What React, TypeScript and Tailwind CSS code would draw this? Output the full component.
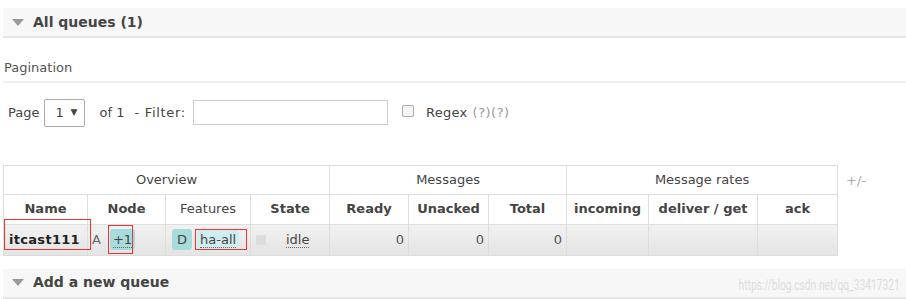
import type { ReactNode } from "react";

const font = { fontFamily: '"DejaVu Sans", Verdana, sans-serif' };

function SectionHeader({ title }: { title: string }) {
  return (
    <div className="flex items-center h-[30px] bg-[#f7f7f7] border-b-2 border-[#e6e6e6] pl-[9px]">
      <span className="w-0 h-0 border-l-[6px] border-r-[6px] border-t-[7px] border-l-transparent border-r-transparent border-t-[#999] mr-[9px]" />
      <span className="text-[14px] font-bold text-[#444]">{title}</span>
    </div>
  );
}

type Col = { label: string; w: number; bold?: boolean };

const cols: Col[] = [
  { label: "Name", w: 84, bold: true },
  { label: "Node", w: 78, bold: true },
  { label: "Features", w: 85 },
  { label: "State", w: 79, bold: true },
  { label: "Ready", w: 79, bold: true },
  { label: "Unacked", w: 80, bold: true },
  { label: "Total", w: 78, bold: true },
  { label: "incoming", w: 82, bold: true },
  { label: "deliver / get", w: 109, bold: true },
  { label: "ack", w: 80, bold: true },
];

function Cell({ children, className = "", span }: { children?: ReactNode; className?: string; span?: number }) {
  return (
    <td colSpan={span} className={`border border-[#ddd] px-[4px] whitespace-nowrap ${className}`}>
      {children}
    </td>
  );
}

function Dotted({ children }: { children: ReactNode }) {
  return <span className="border-b border-dotted border-[#666] leading-[15px]">{children}</span>;
}

export default function App() {
  return (
    <div className="w-[906px] h-[299px] bg-white text-[13px] text-[#444] pt-[8px] pl-[3px] overflow-hidden relative" style={font}>
      <SectionHeader title="All queues (1)" />

      <div className="mt-[20px] pl-[1px] pb-[3px] border-b-2 border-[#eee] text-[#555] text-[13px]">Pagination</div>

      <div className="flex items-center mt-[16px] pl-[5px] text-[13px] text-[#444]">
        <span>Page</span>
        <div className="ml-[5px] w-[41px] h-[28px] border border-[#aaa] rounded-[2px] flex items-center justify-between pl-[10px] pr-[7px]">
          <span>1</span>
          <span className="text-[9px]">▼</span>
        </div>
        <span className="ml-[14px]">of 1</span>
        <span className="ml-[10px] tracking-[0.7px]">- Filter:</span>
        <div className="ml-[7px] w-[195px] h-[25px] border border-[#ccc]" />
        <span className="ml-[14px] w-[12px] h-[12px] border border-[#aaa] rounded-[2px] bg-[#f4f4f4] -mt-[4px]" />
        <span className="ml-[12px] tracking-[0.3px]">Regex</span>
        <span className="ml-[5px] text-[#999] tracking-[0.5px]">(?)(?)</span>
      </div>

      <div className="flex items-start mt-[38px]">
        <table className="border-collapse text-[13px] text-center text-[#444]" style={{ tableLayout: "fixed", width: 834 }}>
          <colgroup>
            {cols.map((c) => (
              <col key={c.label} style={{ width: c.w }} />
            ))}
          </colgroup>
          <thead>
            <tr className="h-[29px]">
              <Cell span={4}>Overview</Cell>
              <Cell span={3}>Messages</Cell>
              <Cell span={3}>Message rates</Cell>
            </tr>
            <tr className="h-[30px]">
              {cols.map((c) => (
                <Cell key={c.label} className={c.bold ? "font-bold" : "font-normal"}>
                  {c.label}
                </Cell>
              ))}
            </tr>
          </thead>
          <tbody>
            <tr className="h-[31px] bg-gradient-to-b from-[#f2f2f2] to-[#e4e4e4]">
              <Cell className="text-left font-bold text-[#222] pl-[5px] tracking-[0.3px]">
                <span className="relative">
                  itcast111
                  <span className="absolute -left-[5px] -top-[13px] w-[87px] h-[31px] border border-[#e33]" />
                </span>
              </Cell>
              <Cell className="text-left">
                <span className="text-[#666]">A</span>
                <span className="relative ml-[9px] inline-block bg-[#a8dcdc] rounded-[3px] px-[3px] h-[21px] leading-[21px]">
                  <Dotted>+1</Dotted>
                  <span className="absolute -left-[2px] -top-[4px] w-[25px] h-[29px] border border-[#e33]" />
                </span>
              </Cell>
              <Cell className="text-left pl-[6px]">
                <span className="inline-block bg-[#a8dcdc] rounded-[3px] px-[5px] h-[21px] leading-[21px]">D</span>
                <span className="relative ml-[5px] inline-block bg-[#cfeeee] rounded-[3px] px-[3px] h-[19px] leading-[19px]">
                  <Dotted>ha-all</Dotted>
                  <span className="absolute -left-[2px] -top-[1px] w-[52px] h-[21px] border border-[#e33]" />
                </span>
              </Cell>
              <Cell className="text-left pl-[5px]">
                <span className="inline-block align-middle w-[10px] h-[10px] bg-[#dcdcdc]" />
                <span className="ml-[20px]">
                  <Dotted>idle</Dotted>
                </span>
              </Cell>
              <Cell className="text-right text-[#555]">0</Cell>
              <Cell className="text-right text-[#555]">0</Cell>
              <Cell className="text-right text-[#555]">0</Cell>
              <Cell />
              <Cell />
              <Cell />
            </tr>
          </tbody>
        </table>
        <span className="ml-[8px] mt-[6px] text-[#aaa] text-[13px]">+/-</span>
      </div>

      <div className="mt-[13px] relative">
        <SectionHeader title="Add a new queue" />
        <span
          className="absolute right-[6px] top-[6px] inline-block text-[14px] text-[#ddd] scale-x-[0.73] origin-right"
          style={{ fontFamily: "Roboto, sans-serif" }}
        >
          https://blog.csdn.net/qq_33417321
        </span>
      </div>
    </div>
  );
}
